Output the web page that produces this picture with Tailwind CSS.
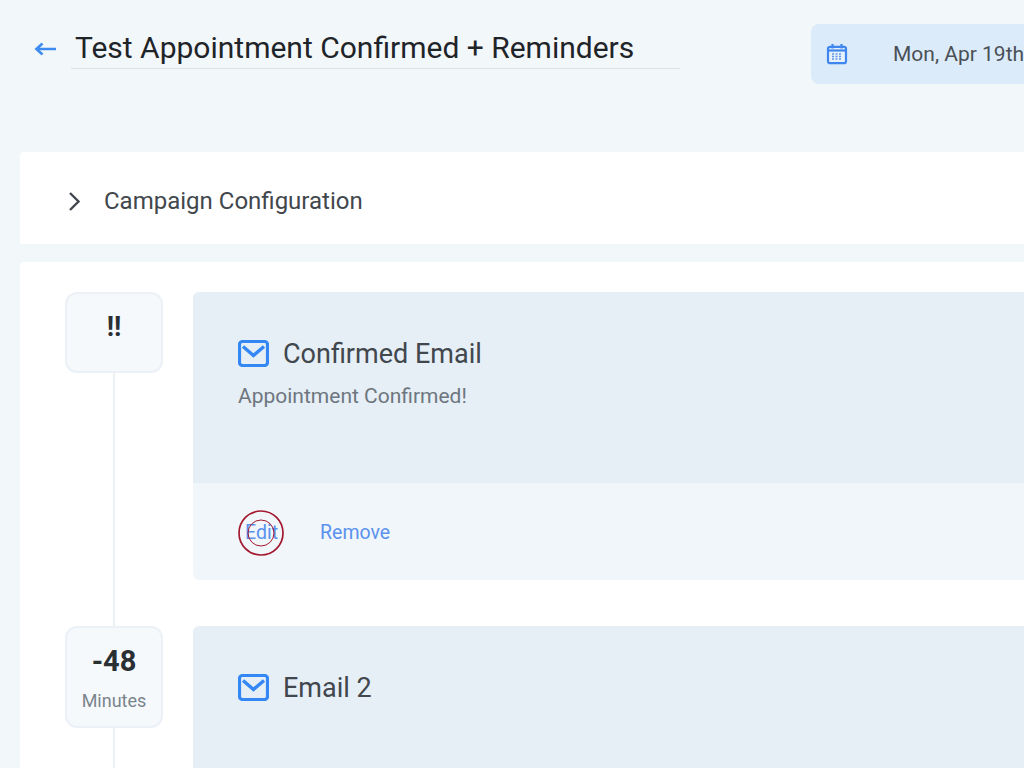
<!doctype html>
<html>
<head>
<meta charset="utf-8">
<script src="https://cdn.jsdelivr.net/npm/@tailwindcss/browser@4"></script>
</head>
<body class="m-0">
<div class="relative w-[1024px] h-[768px] overflow-hidden bg-[#f2f7fa] font-['Roboto',sans-serif]">
  <!-- header -->
  <div class="flex items-start h-[152px] w-[1200px]">
    <div class="w-[71px] h-[96px] pl-[34px] pt-[39px] shrink-0">
      <svg width="23" height="20" viewBox="0 0 23 20" fill="none" stroke="#3f8cf0" stroke-width="2.600"><path d="M2 10H22M8.500 4.500 2.400 10 8.500 15.500"/></svg>
    </div>
    <div class="w-[609px] h-[69px] shrink-0 border-b border-[#dde2e7] pl-[4px] pt-[29px] text-[30px] leading-[38px] text-[#1f2429] whitespace-nowrap">Test Appointment Confirmed + Reminders</div>
    <div class="ml-[131px] mt-[24px] w-[400px] h-[60px] rounded-[8px] bg-[#dbebfa] flex items-center shrink-0">
      <svg class="ml-[15px]" width="22" height="22" viewBox="0 0 22 22" fill="none"><rect x="2" y="3.800" width="18" height="16.400" rx="2" fill="#e6f1fc" stroke="#3f87ee" stroke-width="2.200"/><path d="M2 7.500h18" stroke="#3f87ee" stroke-width="2.200"/><path d="M6.500 1v4.500M15.500 1v4.500" stroke="#3f87ee" stroke-width="2.200"/><path d="M6 11h10M6 13.500h10M6 16h10" stroke="#5f97e6" stroke-width="1.400" stroke-dasharray="2 1.500"/></svg>
      <span class="ml-[45px] mt-[2px] text-[21px] text-[#4a5056] whitespace-nowrap">Mon, Apr 19th</span>
    </div>
  </div>

  <!-- Campaign configuration -->
  <div class="ml-[20px] w-[1100px] h-[92px] bg-white rounded-t-[4px] flex items-center pl-[48px]">
    <svg class="mt-[6px]" width="14" height="20" viewBox="0 0 14 20" fill="none" stroke="#41474d" stroke-width="2.400"><path d="M2 2 10.500 10.500 2 19"/></svg>
    <span class="ml-[22px] mt-[6px] text-[24px] text-[#41474d] whitespace-nowrap">Campaign Configuration</span>
  </div>

  <!-- steps -->
  <div class="ml-[20px] mt-[18px] w-[1100px] h-[600px] bg-white rounded-t-[4px] pt-[30px] pl-[45px]">
    <div class="flex h-[334px]">
      <div class="w-[98px] flex flex-col items-center shrink-0">
        <div class="w-[98px] h-[81px] rounded-[12px] border-2 border-[#ebf1f6] bg-[#f5f9fc] flex justify-center pt-[14px] text-[27px] leading-[38px] font-bold text-[#2a2f34] shrink-0">!!</div>
        <div class="w-[2px] grow bg-[#ebf0f3]"></div>
      </div>
      <div class="ml-[30px] w-[900px] h-[288px] rounded-[6px] overflow-hidden bg-[#f1f6fa] shrink-0">
        <div class="h-[191px] bg-[#e6eef6] pl-[45px] pt-[45px]">
          <div class="flex items-center h-[32px]">
            <svg width="31" height="27" viewBox="0 0 31 27" fill="none"><rect x="1.500" y="1.500" width="28" height="24" rx="3" fill="#e6eef6" stroke="#3388f5" stroke-width="3.200"/><path d="M5 6.500 15.500 15.500 26 6.500" stroke="#3388f5" stroke-width="3.400"/></svg>
            <span class="ml-[14px] mt-[2px] text-[27px] text-[#41474d] whitespace-nowrap">Confirmed Email</span>
          </div>
          <div class="mt-[13px] text-[21px] leading-[28px] text-[#6d767e] whitespace-nowrap">Appointment Confirmed!</div>
        </div>
        <div class="relative h-[97px] flex items-center pl-[52px] pt-[2px] text-[19.5px] text-[#5a92ee]">
          <span>Edit</span>
          <span class="ml-[42px]">Remove</span>
          <svg class="absolute left-[45px] top-[27px]" width="46" height="46" viewBox="0 0 46 46" fill="none" stroke="#a3182f"><circle cx="23" cy="23" r="22" stroke-width="1.700"/><circle cx="23" cy="23" r="13" stroke-width="1"/></svg>
        </div>
      </div>
    </div>
    <div class="flex h-[300px]">
      <div class="w-[98px] flex flex-col items-center shrink-0">
        <div class="w-[98px] h-[102px] rounded-[12px] border-2 border-[#ebf1f6] bg-[#f5f9fc] flex flex-col items-center pt-[15px] shrink-0">
          <span class="text-[29px] leading-[36px] font-bold text-[#2a2f34]">-48</span>
          <span class="mt-[10px] text-[18px] leading-[24px] text-[#7b848c]">Minutes</span>
        </div>
        <div class="w-[2px] grow bg-[#ebf0f3]"></div>
      </div>
      <div class="ml-[30px] w-[900px] h-[288px] rounded-t-[6px] bg-[#e6eef6] pl-[45px] pt-[45px] shrink-0">
        <div class="flex items-center h-[32px]">
          <svg width="31" height="27" viewBox="0 0 31 27" fill="none"><rect x="1.500" y="1.500" width="28" height="24" rx="3" fill="#e6eef6" stroke="#3388f5" stroke-width="3.200"/><path d="M5 6.500 15.500 15.500 26 6.500" stroke="#3388f5" stroke-width="3.400"/></svg>
          <span class="ml-[14px] mt-[2px] text-[27px] text-[#41474d] whitespace-nowrap">Email 2</span>
        </div>
      </div>
    </div>
  </div>
</div>
</body>
</html>
